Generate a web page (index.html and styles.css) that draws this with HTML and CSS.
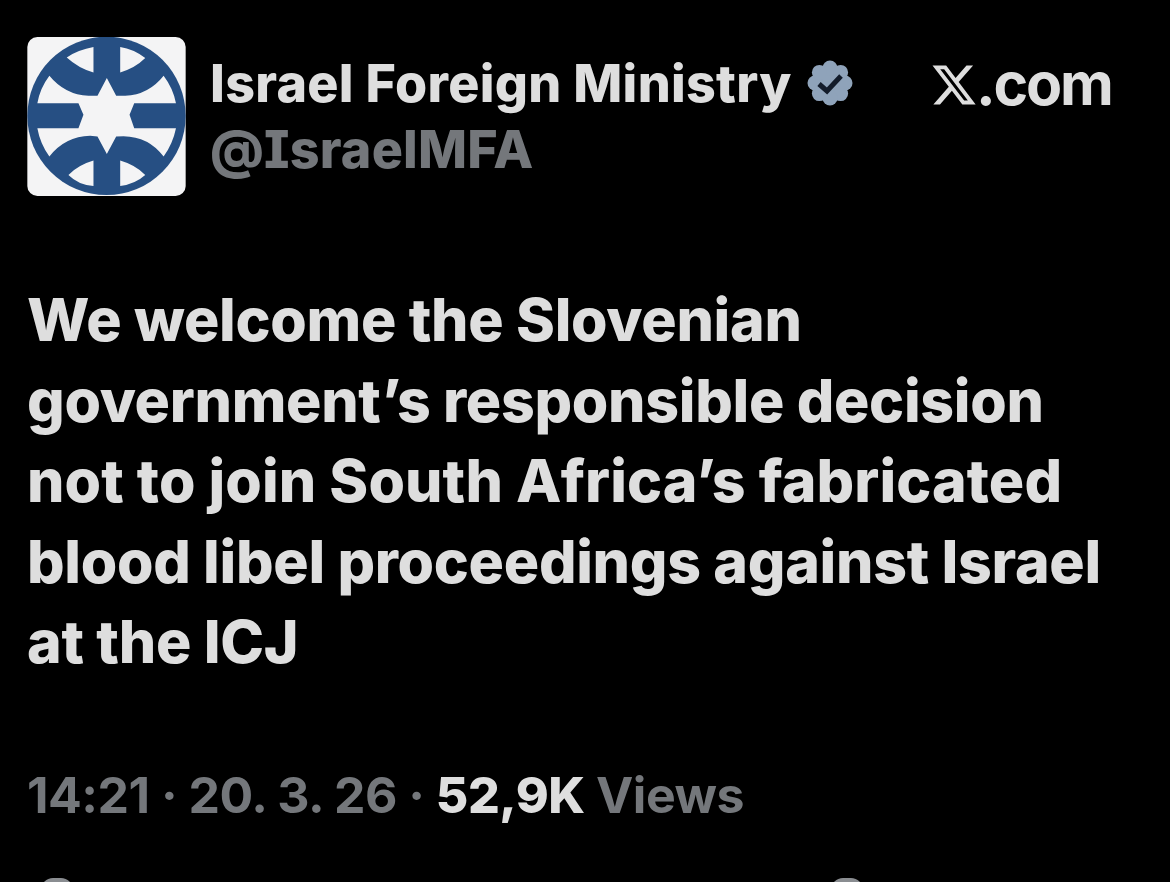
FILE: index.html
```html
<!DOCTYPE html>
<html lang="en">
<head>
<meta charset="utf-8">
<title>Israel Foreign Ministry on X</title>
<link rel="stylesheet" href="styles.css">
</head>
<body>
<main class="post">
  <header class="head">
    <svg class="avatar" viewBox="52 52 474 476" aria-hidden="true">
      <rect x="52" y="52" width="474" height="476" rx="30" fill="#f4f4f5"/>
      <circle cx="289" cy="288" r="237" fill="#264f83"/>
      <path fill="#f4f4f5" d="M118 168Q165 225 235 228L262 228L290 175L318 228L345 228Q415 225 460 168Q488 205 497 250L372 250L358 285L372 325L497 325Q488 370 460 410Q415 350 340 349L318 350L290 402L262 350L240 348Q165 350 118 410Q90 370 82 325L205 325L220 285L205 250L82 250Q90 205 118 168Z"/>
      <path fill="#f4f4f5" d="M170 113Q205 90 250 82L250 158Q205 145 170 113ZM330 82Q370 88 405 115Q375 145 330 158ZM175 465Q205 435 250 422L250 498Q205 495 175 465ZM330 422Q375 435 405 465Q375 492 330 498Z"/>
    </svg>
    <div class="who">
      <div class="name-row">
        <span class="name">Israel Foreign Ministry</span>
        <svg class="badge" viewBox="0 0 46 46" aria-hidden="true">
          <g fill="#8fa3ba">
            <circle cx="23" cy="23" r="16"/>
            <circle cx="23" cy="8" r="7.5"/>
            <circle cx="33.6" cy="12.4" r="7.5"/>
            <circle cx="38" cy="23" r="7.5"/>
            <circle cx="33.6" cy="33.6" r="7.5"/>
            <circle cx="23" cy="38" r="7.5"/>
            <circle cx="12.4" cy="33.6" r="7.5"/>
            <circle cx="8" cy="23" r="7.5"/>
            <circle cx="12.4" cy="12.4" r="7.5"/>
          </g>
          <path fill="none" stroke="#131c2b" stroke-width="5" d="M12 24l8 7 14-15"/>
        </svg>
      </div>
      <div class="handle">@IsraelMFA</div>
    </div>
    <div class="brand">
      <svg class="x" viewBox="1 2 22 20" aria-hidden="true">
        <path fill="#dedede" d="M18.244 2.25h3.308l-7.227 8.26 8.502 11.24H16.17l-5.214-6.817L4.99 21.75H1.68l7.73-8.835L1.254 2.25H8.08l4.713 6.231zm-1.161 17.52h1.833L7.084 4.126H5.117z"/>
      </svg><span>.com</span>
    </div>
  </header>
  <p class="text">We welcome the Slovenian<br>government’s responsible decision<br><span class="wide">not to join South Africa’s fabricated</span><br>blood libel proceedings against Israel<br>at the ICJ</p>
  <p class="meta">14:21 · 20. 3. 26 · <b class="count">52,9K</b> Views</p>
</main>
<div class="peek">
  <i class="nub"></i>
  <i class="nub"></i>
</div>
</body>
</html>
```
FILE: styles.css
```css
html, body {
  margin: 0;
  height: 882px;
  overflow: hidden;
  background: #000;
}
body {
  display: flex;
  flex-direction: column;
  font-family: Inter, "Liberation Sans", sans-serif;
}
.post {
  flex: 1;
  padding: 37px 0 0 27px;
}
.head {
  display: flex;
  align-items: flex-start;
}
.avatar {
  width: 159px;
  height: 159px;
  flex: none;
  display: block;
}
.who {
  margin: 15px 0 0 24px;
  width: 722px;
}
.name-row {
  display: flex;
  align-items: center;
  gap: 15px;
  height: 62px;
}
.name {
  font-size: 52px;
  font-weight: 800;
  letter-spacing: 0.3px;
  color: #dedede;
}
.badge {
  width: 46px;
  height: 46px;
}
.handle {
  font-size: 52px;
  font-weight: 800;
  letter-spacing: 0.2px;
  line-height: 62px;
  margin-top: 5px;
  color: #74777b;
  font-feature-settings: "cv08";
}
.brand {
  display: flex;
  align-items: center;
  margin: 15px 0 0 0;
  height: 62px;
  font-size: 59px;
  font-weight: 700;
  letter-spacing: -2.2px;
  color: #dedede;
}
.x {
  width: 44px;
  height: 44px;
  margin-top: 4px;
}
.text {
  margin: 84px 0 0;
  font-size: 59px;
  font-weight: 800;
  line-height: 80.5px;
  letter-spacing: -0.3px;
  color: #dedede;
}
.wide {
  letter-spacing: 0.1px;
}
.meta {
  margin: 81px 0 0;
  font-size: 50px;
  font-weight: 700;
  line-height: 62px;
  letter-spacing: -0.5px;
  color: #74777b;
}
.count {
  font-weight: 800;
  color: #dedede;
}
.peek {
  flex: none;
  height: 4px;
  display: flex;
  gap: 758px;
  padding-left: 41px;
  overflow: hidden;
}
.nub {
  display: block;
  width: 32px;
  height: 12px;
  border-radius: 12px 12px 0 0;
  background: #8a8d91;
}
```
